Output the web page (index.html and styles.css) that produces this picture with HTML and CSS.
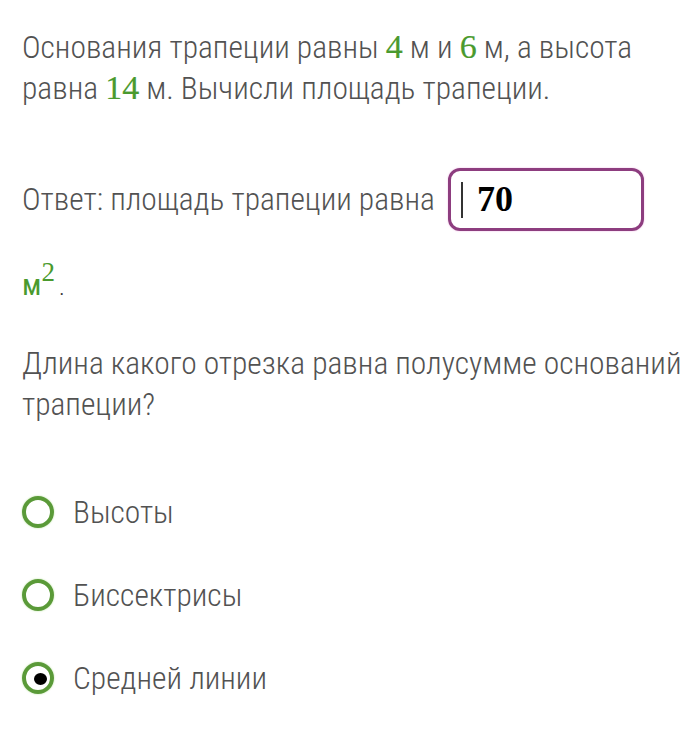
FILE: index.html
```html
<!DOCTYPE html>
<html lang="ru">
<head>
<meta charset="utf-8">
<link rel="stylesheet" href="styles.css">
</head>
<body>
<div class="page">
  <p class="task">Основания трапеции равны <span class="num">4</span> м и <span class="num">6</span> м, а высота равна <span class="num">14</span> м. Вычисли площадь трапеции.</p>

  <div class="answer">
    <span class="answer-label">Ответ: площадь трапеции равна</span>
    <span class="field"><span class="caret"></span><span class="value">70</span></span>
  </div>
  <div class="unit"><span class="m">м</span><sup class="sq">2</sup><span class="dot">.</span></div>

  <p class="question">Длина какого отрезка равна полусумме оснований трапеции?</p>

  <div class="options">
    <div class="option"><span class="radio"></span><span class="opt-label">Высоты</span></div>
    <div class="option"><span class="radio"></span><span class="opt-label">Биссектрисы</span></div>
    <div class="option"><span class="radio checked"></span><span class="opt-label">Средней линии</span></div>
  </div>
</div>
</body>
</html>
```

FILE: styles.css
```css
html, body {
  margin: 0;
  padding: 0;
  background: #ffffff;
}
.page {
  padding: 27px 0 0 22px;
  font-family: "Roboto Condensed", Roboto, "Liberation Sans", sans-serif;
  font-weight: 300;
  font-stretch: 85%;
  font-size: 31.5px;
  line-height: 41px;
  color: #525252;
}
.task {
  margin: 0;
  width: 650px;
}
.num {
  display: inline-block;
  font-family: "Liberation Serif", serif;
  font-weight: 400;
  font-size: 34px;
  line-height: 30px;
  color: #4a9a2e;
  -webkit-text-stroke: 0.2px #4a9a2e;
}
.answer {
  display: flex;
  align-items: center;
  gap: 13px;
  margin-top: 59px;
}
.field {
  display: flex;
  align-items: center;
  width: 190px;
  height: 57px;
  border: 3px solid #8d3d7f;
  border-radius: 12px;
  box-shadow: 0 0 2px #f0b8e6;
  box-sizing: content-box;
}
.caret {
  width: 2px;
  height: 36px;
  background: #333;
  margin-left: 10px;
  margin-right: 14px;
}
.value {
  font-family: "Liberation Serif", serif;
  font-weight: 700;
  font-size: 36px;
  color: #000;
}
.unit {
  margin-top: 34px;
  height: 40px;
  line-height: 40px;
}
.m {
  font-weight: 400;
  color: #4a9a2e;
  font-size: 30px;
}
.sq {
  font-family: "Liberation Serif", serif;
  color: #4a9a2e;
  font-size: 27px;
  vertical-align: 14px;
  line-height: 0;
}
.dot {
  font-size: 24px;
  color: #333;
  margin-left: 4px;
}
.question {
  margin: 38px 0 0 0;
  width: 671px;
}
.options {
  display: flex;
  flex-direction: column;
  gap: 43px;
  margin-top: 67px;
}
.option {
  display: flex;
  align-items: center;
  gap: 19px;
  height: 40px;
}
.radio {
  width: 24px;
  height: 24px;
  border: 4px solid #5a9a38;
  border-radius: 50%;
  box-shadow: 0 0 2px #b6e39a;
  position: relative;
  flex: none;
}
.radio.checked::after {
  content: "";
  position: absolute;
  left: 8px;
  top: 7px;
  width: 13px;
  height: 12px;
  border-radius: 50%;
  background: #000;
}
```
